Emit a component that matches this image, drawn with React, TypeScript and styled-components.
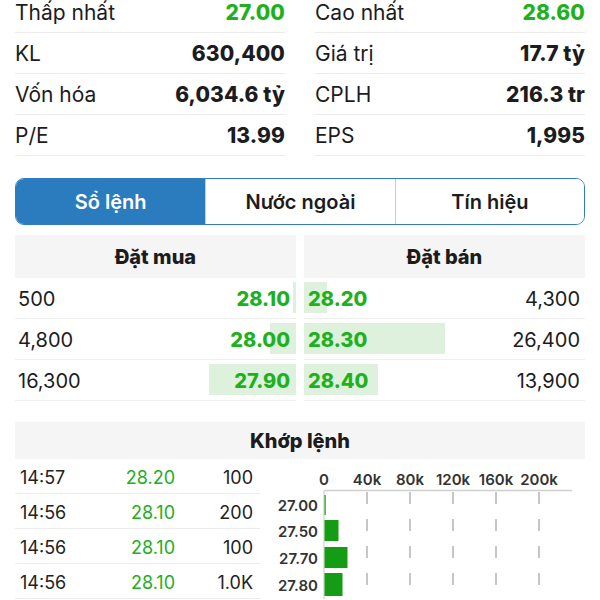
import React from "react";
import styled, { createGlobalStyle } from "styled-components";

const GlobalStyle = createGlobalStyle`
  html, body {
    margin: 0;
    padding: 0;
    background: #ffffff;
    font-family: Inter, "Noto Sans", "Liberation Sans", sans-serif;
    color: #1c1c1e;
    overflow: hidden;
  }
  * { box-sizing: border-box; }
`;

const Page = styled.div`
  width: 600px;
  height: 600px;
  padding: 0 15px;
  overflow: hidden;
`;

const StatsGrid = styled.div`
  display: grid;
  grid-template-columns: 1fr 1fr;
  column-gap: 30px;
  margin-top: -8px;
`;

const StatRow = styled.div`
  display: flex;
  align-items: center;
  justify-content: space-between;
  height: 41px;
  padding-top: 1px;
  border-bottom: 1px solid #ececec;
`;

const StatLabel = styled.span`
  font-size: 21px;
  font-weight: 400;
  color: #1c1c1e;
`;

const StatValue = styled.span<{ $green?: boolean }>`
  font-size: 21px;
  font-weight: 800;
  letter-spacing: 0.1px;
  color: ${(p) => (p.$green ? "#1db11d" : "#1c1c1e")};
`;

const Tabs = styled.div`
  margin-top: 22px;
  display: grid;
  grid-template-columns: repeat(3, 1fr);
  height: 47px;
  border: 1px solid #2f7dbf;
  border-radius: 9px;
  overflow: hidden;
`;

const Tab = styled.div<{ $active?: boolean }>`
  display: flex;
  align-items: center;
  justify-content: center;
  font-size: 20px;
  font-weight: 600;
  background: ${(p) => (p.$active ? "#2b7bbf" : "#ffffff")};
  color: ${(p) => (p.$active ? "#ffffff" : "#1c1c1e")};
  & + & {
    border-left: 1px solid ${(p) => (p.$active ? "#2b7bbf" : "#c8ccd2")};
  }
`;

const OrderBook = styled.div`
  margin-top: 10px;
  display: grid;
  grid-template-columns: 1fr 1fr;
  column-gap: 8px;
`;

const Panel = styled.div``;

const SectionHeader = styled.div<{ $h: number }>`
  height: ${(p) => p.$h}px;
  display: flex;
  align-items: center;
  justify-content: center;
  background: #f5f5f5;
  font-size: 20px;
  font-weight: 800;
  color: #1c1c1e;
`;

const BookRow = styled.div<{ $side: "bid" | "ask" }>`
  position: relative;
  display: flex;
  align-items: center;
  justify-content: space-between;
  height: 41px;
  padding-top: 2px;
  border-bottom: 1px solid #efefef;
  padding-left: ${(p) => (p.$side === "bid" ? "3px" : "4px")};
  padding-right: ${(p) => (p.$side === "bid" ? "6px" : "5px")};
`;

const DepthBar = styled.div<{ $side: "bid" | "ask" }>`
  position: absolute;
  top: 4px;
  bottom: 5px;
  ${(p) => (p.$side === "bid" ? "right: 0;" : "left: 0;")}
  background: #ddf1dd;
`;

const Qty = styled.span`
  position: relative;
  font-size: 20px;
  font-weight: 400;
  color: #1c1c1e;
`;

const Price = styled.span`
  position: relative;
  font-size: 20px;
  font-weight: 800;
  color: #1db11d;
`;

const MatchSection = styled.div`
  margin-top: 21px;
`;

const MatchBody = styled.div`
  display: grid;
  grid-template-columns: 245px 1fr;
`;

const TradeList = styled.div``;

const TradeRow = styled.div`
  display: grid;
  grid-template-columns: 1fr 70px 78px;
  align-items: center;
  height: 35px;
  padding: 2px 7px 0 5px;
  border-bottom: 1px solid #ececec;
  font-size: 18px;
  color: #222;
`;

const TradeTime = styled.span``;

const TradePrice = styled.span`
  text-align: right;
  color: #22ad22;
`;

const TradeVol = styled.span`
  text-align: right;
`;

const ChartBox = styled.div`
  height: 140px;
`;

const stats: [string, string, boolean][][] = [
  [
    ["Thấp nhất", "27.00", true],
    ["Cao nhất", "28.60", true],
  ],
  [
    ["KL", "630,400", false],
    ["Giá trị", "17.7 tỷ", false],
  ],
  [
    ["Vốn hóa", "6,034.6 tỷ", false],
    ["CPLH", "216.3 tr", false],
  ],
  [
    ["P/E", "13.99", false],
    ["EPS", "1,995", false],
  ],
];

const bids = [
  { qty: 500, label: "500", price: "28.10" },
  { qty: 4800, label: "4,800", price: "28.00" },
  { qty: 16300, label: "16,300", price: "27.90" },
];
const asks = [
  { qty: 4300, label: "4,300", price: "28.20" },
  { qty: 26400, label: "26,400", price: "28.30" },
  { qty: 13900, label: "13,900", price: "28.40" },
];
const maxQty = 26400;

const trades = [
  ["14:57", "28.20", "100"],
  ["14:56", "28.10", "200"],
  ["14:56", "28.10", "100"],
  ["14:56", "28.10", "1.0K"],
];

const Chart = () => {
  const x0 = 64;
  const step = 43;
  const ticks = ["0", "40k", "80k", "120k", "160k", "200k"];
  const cats = [
    { label: "27.00", y: 46, w: 1.2, top: 36, h: 20 },
    { label: "27.50", y: 72, w: 14, top: 61, h: 21 },
    { label: "27.70", y: 99, w: 23, top: 88, h: 21 },
    { label: "27.80", y: 126, w: 18, top: 114, h: 23 },
  ];
  return (
    <svg width="325" height="140" viewBox="0 0 325 140">
      {ticks.map((t, i) => (
        <text
          key={t}
          x={x0 + i * step}
          y={26}
          textAnchor="middle"
          fontSize="15"
          fontWeight="600"
          fill="#333"
          fontFamily="Inter, sans-serif"
        >
          {t}
        </text>
      ))}
      <line x1={x0} y1={31.5} x2={312} y2={31.5} stroke="#cfcfcf" strokeWidth="1.5" />
      {ticks.slice(1).map((t, i) => (
        <line
          key={t}
          x1={x0 + (i + 1) * step}
          x2={x0 + (i + 1) * step}
          y1={33}
          y2={140}
          stroke="#b8b8b8"
          strokeWidth="1.6"
          strokeDasharray="12 15"
        />
      ))}
      <line x1={x0} y1={31} x2={x0} y2={140} stroke="#cfcfcf" strokeWidth="1.2" />
      {cats.map((c) => (
        <g key={c.label}>
          <text
            x={58}
            y={c.y + 6}
            textAnchor="end"
            fontSize="15"
            fontWeight="600"
            fill="#333"
            fontFamily="Inter, sans-serif"
          >
            {c.label}
          </text>
          <rect x={x0 + 0.5} y={c.top} width={c.w} height={c.h} fill="#149c14" />
        </g>
      ))}
    </svg>
  );
};

export default function App() {
  return (
    <>
      <GlobalStyle />
      <Page>
        <StatsGrid>
          {stats.map((row) =>
            row.map(([label, value, green]) => (
              <StatRow key={label}>
                <StatLabel>{label}</StatLabel>
                <StatValue $green={green}>{value}</StatValue>
              </StatRow>
            ))
          )}
        </StatsGrid>

        <Tabs>
          <Tab $active>Sổ lệnh</Tab>
          <Tab>Nước ngoài</Tab>
          <Tab>Tín hiệu</Tab>
        </Tabs>

        <OrderBook>
          <Panel>
            <SectionHeader $h={43}>Đặt mua</SectionHeader>
            {bids.map((b) => (
              <BookRow key={b.price} $side="bid">
                <DepthBar $side="bid" style={{ width: `${(b.qty / maxQty) * 50}%` }} />
                <Qty>{b.label}</Qty>
                <Price>{b.price}</Price>
              </BookRow>
            ))}
          </Panel>
          <Panel>
            <SectionHeader $h={43}>Đặt bán</SectionHeader>
            {asks.map((a) => (
              <BookRow key={a.price} $side="ask">
                <DepthBar $side="ask" style={{ width: `${(a.qty / maxQty) * 50}%` }} />
                <Price>{a.price}</Price>
                <Qty>{a.label}</Qty>
              </BookRow>
            ))}
          </Panel>
        </OrderBook>

        <MatchSection>
          <SectionHeader $h={37}>Khớp lệnh</SectionHeader>
          <MatchBody>
            <TradeList>
              {trades.map(([t, p, v], i) => (
                <TradeRow key={i}>
                  <TradeTime>{t}</TradeTime>
                  <TradePrice>{p}</TradePrice>
                  <TradeVol>{v}</TradeVol>
                </TradeRow>
              ))}
            </TradeList>
            <ChartBox>
              <Chart />
            </ChartBox>
          </MatchBody>
        </MatchSection>
      </Page>
    </>
  );
}
